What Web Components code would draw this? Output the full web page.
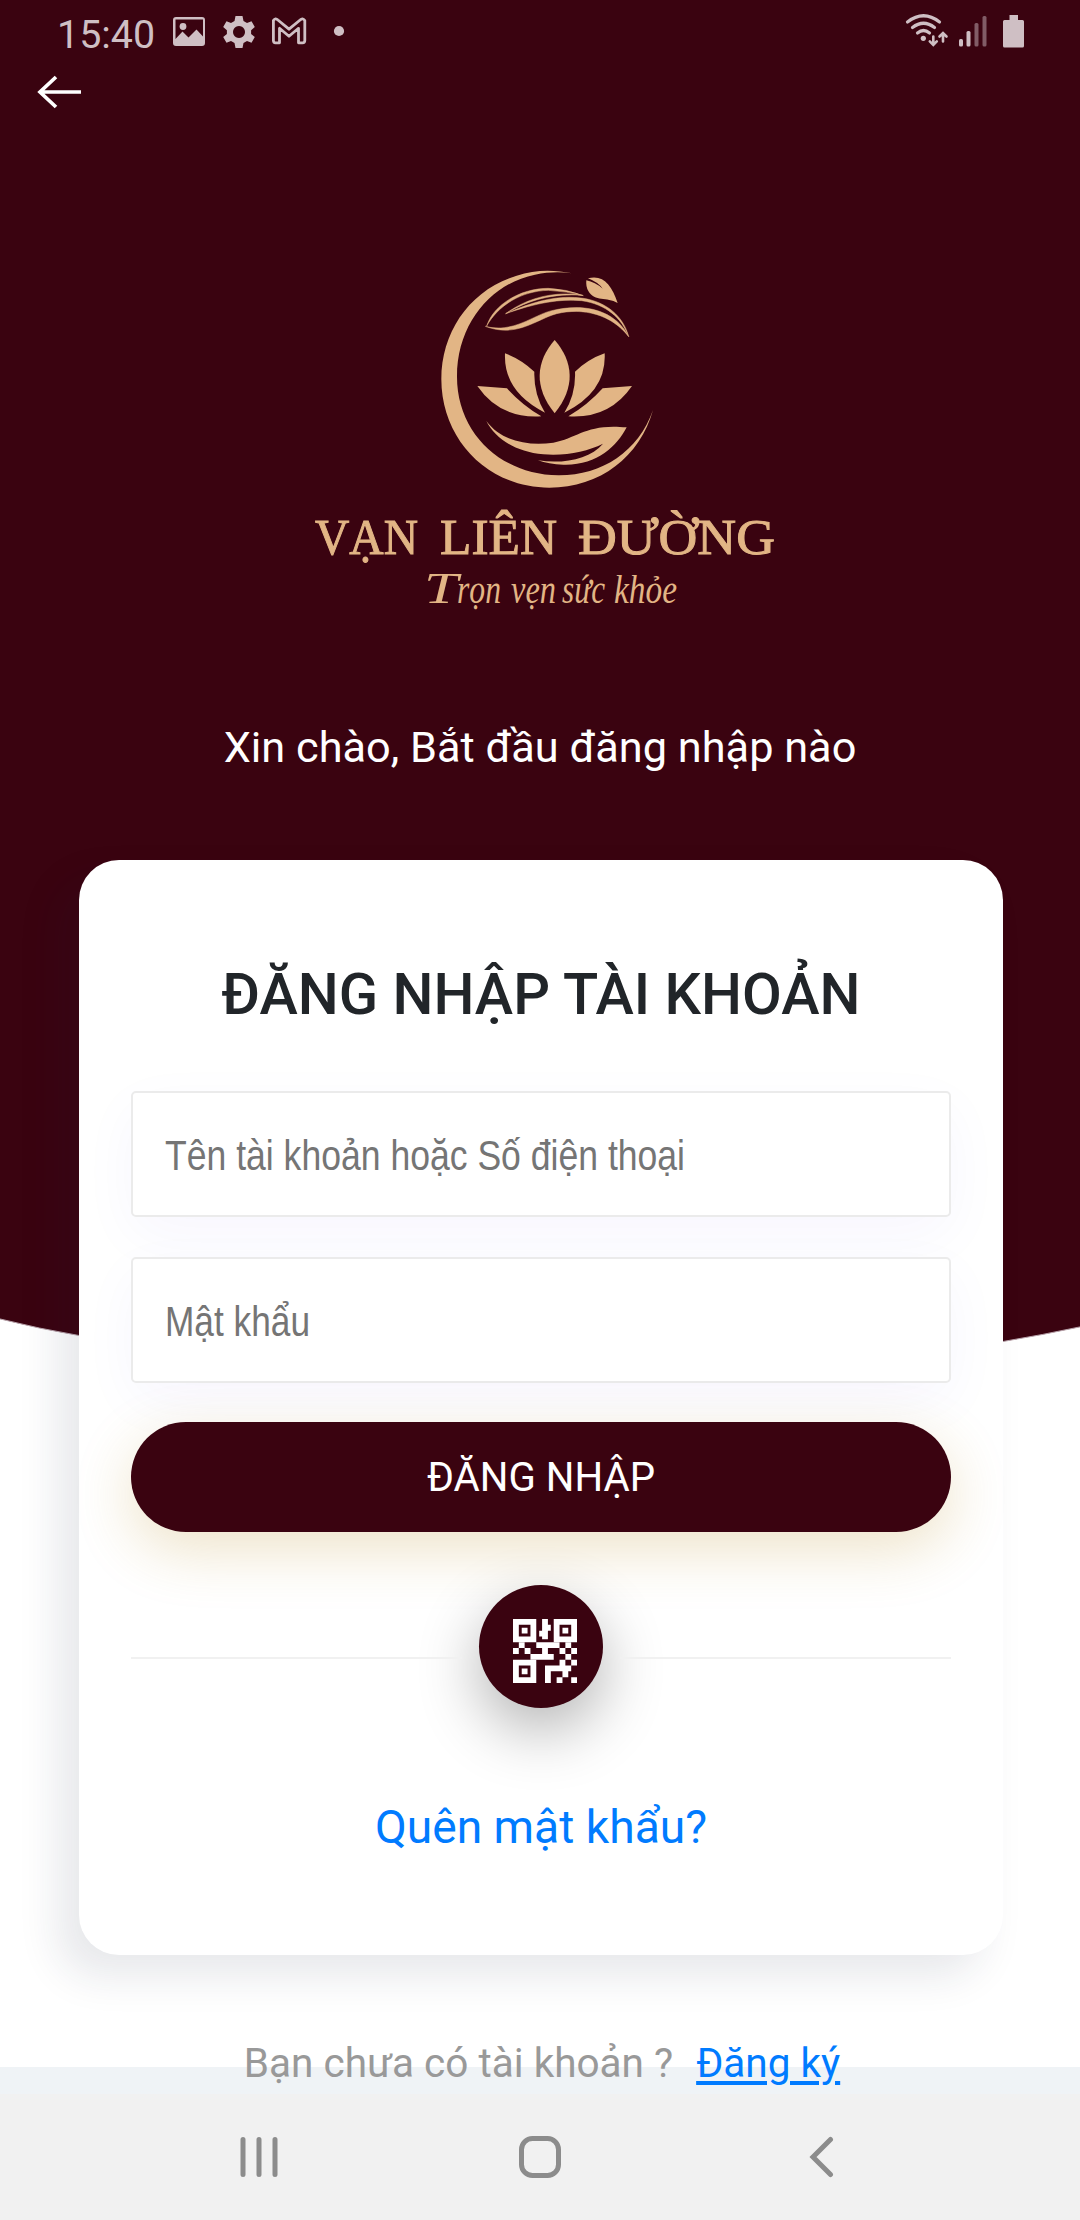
<!DOCTYPE html>
<html lang="vi">
<head>
<meta charset="utf-8">
<title>Đăng nhập</title>
<style>
html,body{margin:0;padding:0;background:#fff}
body{font-family:Roboto,"Liberation Sans",sans-serif;width:1080px;height:2220px;overflow:hidden}
</style>
</head>
<body>
<login-screen></login-screen>
<script>
const define = (name, html) => {
  const t = document.createElement('template');
  t.innerHTML = html;
  customElements.define(name, class extends HTMLElement {
    constructor() {
      super();
      this.attachShadow({ mode: 'open' }).append(t.content.cloneNode(true));
    }
  });
};

define('status-bar', `
<style>
:host{display:flex;height:68px;align-items:center;justify-content:space-between;color:#cfbfc4}
span{font-size:39.4px;line-height:67px;width:95px;margin-left:57px;white-space:nowrap}
svg{display:block;fill:currentColor}
.left{display:flex;align-items:center}
</style>
<div class="left"><span>15:40</span>
<svg width="200" height="68" viewBox="152 0 200 68">
  <path fill-rule="evenodd" d="M176 17h26a3 3 0 0 1 3 3v23a3 3 0 0 1-3 3h-26a3 3 0 0 1-3-3v-23a3 3 0 0 1 3-3zM175.500 19.500v19.500l7-7.500 6 6 8-8 6.500 7v-17z"/>
  <circle cx="183" cy="26.500" r="3.400"/>
  <path fill-rule="evenodd" d="M235.500 16h7l1 5 3.500 2 4.500-1.700 3.300 5.700-3.700 3.300v3.600l3.700 3.200-3.300 5.700-4.500-1.700-3.500 2-1 5h-7l-1-5-3.500-2-4.500 1.700-3.300-5.700 3.700-3.200v-3.600l-3.700-3.300 3.300-5.700 4.500 1.700 3.500-2zM239 26a6 6 0 1 0 .01 0z"/>
  <path fill="none" stroke="currentColor" stroke-width="2.800" stroke-linejoin="round" d="M273.400 20.500q2-3 4.500-.5l11.100 9.200 11.100-9.200q2.500-2.500 4.700.5v20q0 2.300-2.300 2.300h-4v-14.500l-9.500 8-9.500-8v14.500h-4q-2.100 0-2.100-2.300z"/>
  <circle cx="339" cy="31" r="5.100"/>
</svg></div>
<svg width="180" height="68" viewBox="900 0 180 68">
  <g fill="none" stroke="currentColor" stroke-width="3.200" stroke-linecap="round">
    <path d="M907.500 22q16-12.500 32 0M912.500 27.500q11-8.500 22 0M917.500 33q6-5 12 0"/>
    <path stroke-width="2.600" d="M933.300 36.500v7.500M929.800 41.300l3.500 3.500 3.500-3.500M943 41.500v-7.500M939.500 36.500l3.500-3.500 3.500 3.500"/>
  </g>
  <circle cx="923.300" cy="38.300" r="2.600"/>
  <rect x="959" y="39" width="4" height="7.500" rx="1.500"/>
  <rect x="966.500" y="31" width="4" height="15.500" rx="1.500"/>
  <rect x="974.500" y="23" width="4" height="23.500" rx="1.500" opacity=".48"/>
  <rect x="982.500" y="16" width="4" height="30.500" rx="1.500" opacity=".48"/>
  <path d="M1009.500 15h8.500v5h4.500q1.500 0 1.500 1.500v24.500q0 1.500-1.500 1.500h-18q-1.500 0-1.500-1.500v-24.500q0-1.500 1.500-1.500h5z"/>
</svg>`);

define('back-bar', `
<style>:host{display:flex;height:48px;align-items:center;padding-left:34px}svg{display:block}</style>
<svg width="52" height="48" viewBox="34 68 52 48"><path d="M56 77L40 92l16 15M40 92H81" fill="none" stroke="#fff" stroke-width="3.700"/></svg>`);

define('brand-logo', `
<style>:host{display:flex;justify-content:center;padding-top:139px}svg{display:block;fill:#e2b585}
.n{font:51px "Liberation Serif",serif;stroke:#e2b585;stroke-width:1}
.t{font:italic 39px "Liberation Serif",serif}</style>
<svg width="490" height="365" viewBox="295 255 490 365">
  <g transform="translate(420 255) scale(.33333)">
    <path d="M456 55C400 44 345 44 290 62C150 104 64 230 64 372C64 555 205 698 388 698C540 698 660 605 699 465C655 590 545 662 415 661C245 660 111 535 111 365C111 205 215 85 345 59C385 51 420 50 456 55Z"/>
    <path d="M404 255C348 320 340 395 404 475C468 395 460 320 404 255Z"/>
    <path d="M255 295Q302 312 343 350Q341 417 375 473Q250 410 255 295ZM554 295Q505 312 465 350Q468 417 433 473Q560 410 554 295Z"/>
    <path d="M172 393L261 400Q306 450 364 484Q240 492 172 393ZM636 393L548 400Q503 450 445 484Q568 492 636 393Z"/>
    <path d="M199 498C245 560 325 573 400 563C475 548 500 505 620 517C590 575 530 632 430 629Q385 628 354 616C430 628 510 612 549 566C500 590 440 603 370 598C285 590 225 550 199 498Z"/>
    <path d="M499 76Q525 81 548 101Q535 82 504 70C550 58 575 90 593 144C560 124 525 142 505 108Q497 95 499 76Z"/>
    <g stroke="#e2b585" stroke-width="1.500">
    <path d="M200 213C220 150 300 100 385 100Q440 102 490 122Q440 109 385 106C305 108 235 150 200 213Z"/>
    <path d="M257 176C320 130 400 107 488 121C400 114 325 135 257 176Z"/>
    <path d="M257 176C350 135 420 120 490 130C560 141 610 185 625 242C605 190 560 148 485 137C420 131 350 143 257 176Z"/>
    <path d="M196 214C280 236 340 180 395 167C495 143 585 165 627 246C575 178 490 157 410 176C350 192 290 250 196 214Z"/>
    </g>
  </g>
  <text class="n" y="553.500"><tspan x="315" textLength="103" lengthAdjust="spacingAndGlyphs">VẠN</tspan><tspan> </tspan><tspan x="440" textLength="117" lengthAdjust="spacingAndGlyphs">LIÊN</tspan><tspan> </tspan><tspan x="578" textLength="197" lengthAdjust="spacingAndGlyphs">ĐƯỜNG</tspan></text>
  <text class="t" y="603"><tspan x="424" font-size="44" textLength="34" lengthAdjust="spacingAndGlyphs">T</tspan><tspan x="457" textLength="44" lengthAdjust="spacingAndGlyphs">rọn</tspan><tspan> </tspan><tspan x="511" textLength="45" lengthAdjust="spacingAndGlyphs">vẹn</tspan><tspan> </tspan><tspan x="562" textLength="43" lengthAdjust="spacingAndGlyphs">sức</tspan><tspan> </tspan><tspan x="614" textLength="63" lengthAdjust="spacingAndGlyphs">khỏe</tspan></text>
</svg>`);

define('wave-backdrop', `
<style>
:host{display:flex;flex-direction:column;background:#eff3f6}
.page{background:#fff;height:2067px}
svg{display:block}
</style>
<div class="page"><svg width="1080" height="1400" viewBox="0 0 1080 1400"><path fill="#3a0310" stroke="#b9a3ab" stroke-width="1" d="M-2-2H1082V1326.500Q1042 1335 1003 1341.500Q540 1420 79 1335.500Q40 1329 -2 1318.500Z"/></svg></div>`);

customElements.define('input-hint', class extends HTMLElement {
  constructor() {
    super();
    this.attachShadow({ mode: 'open' }).innerHTML = `
<style>
:host{display:flex;box-sizing:border-box;height:126px;align-items:center;border:2px solid #ebebeb;border-radius:5px;background:#fff;padding-left:32px;box-shadow:0 18px 58px rgba(40,30,235,.04)}
svg{display:block;overflow:visible}
text{font:42px "Liberation Sans Narrow","Liberation Sans",sans-serif;fill:#757575}
</style>
<svg width="700" height="60"><text x="0" y="46" lengthAdjust="spacingAndGlyphs" textLength="${this.getAttribute('width')}">${this.getAttribute('label')}</text></svg>`;
  }
});

define('pill-button', `
<style>:host{display:flex;height:110px;align-items:center;justify-content:center;border-radius:55px;background:#3a0310;color:#fff;font-size:40.200px;box-shadow:0 18px 58px rgba(184,140,30,.24)}</style><slot></slot>`);

define('qr-divider', `
<style>
:host{display:flex;justify-content:space-between;align-items:flex-start}
i{display:block;width:331px;height:2px;margin-top:72px;background:#f1f1f1;position:relative}
.c{width:124px;height:123px;border-radius:50%;background:#3a0310;display:flex;align-items:center;justify-content:center;box-shadow:0 22px 62px rgba(0,0,0,.3)}
svg{display:block;margin:9px 0 0 8px}
</style>
<i></i><div class="c"><svg width="64" height="64" viewBox="0 0 11 11" fill="#fff">
<path fill-rule="evenodd" d="M0 0h4v4H0zM1 1v2h2v-2zM7 0h4v4H7zM8 1v2h2v-2zM0 7h4v4H0zM1 8v2h2v-2z"/>
<path d="M1.500 1.500h1v1h-1zM8.500 1.500h1v1h-1zM1.500 8.500h1v1h-1zM5 0h1v1h.5v1H6v1.500H5V3h-.5V2H5zM1 4h1v1H1zM0 5h1v1H0zM2 5h1v1H2zM4 4h4v1H6v1h1v1H3V6h2V5H4zM9 4h1v1H9zM8 5h1v1H8zM10 5h1v1h-1zM9 6h1v1H9zM8 7h1v1H8zM10 7h1v1h-1zM5.500 8H10v1h-.5v1h-1V9h-2v2h-1zM7.500 10h1v1h-1zM10 10h1v1h-1z"/>
</svg></div><i></i>`);

define('login-card', `
<style>
:host{display:flex;flex-direction:column;box-sizing:border-box;width:924px;height:1095px;padding:99px 52px 0;border-radius:40px;background:#fff;box-shadow:-21px 21px 42px rgba(25,35,65,.105)}
h1{margin:0;font-size:57.750px;line-height:71px;height:70px;font-weight:500;color:#212529;text-align:center;white-space:nowrap}
.form{display:flex;flex-direction:column;gap:40px;margin-top:62px}
pill-button{margin-top:-1px}
qr-divider{margin-top:53px}
a{display:block;margin-top:89px;font-size:46.200px;line-height:60px;color:#007bff;text-align:center}
</style>
<h1>ĐĂNG NHẬP TÀI KHOẢN</h1>
<div class="form">
<input-hint label="Tên tài khoản hoặc Số điện thoại" width="520"></input-hint>
<input-hint label="Mật khẩu" width="145"></input-hint>
<pill-button>ĐĂNG NHẬP</pill-button>
</div>
<qr-divider></qr-divider>
<a>Quên mật khẩu?</a>`);

define('signup-line', `
<style>:host{display:flex;justify-content:center;gap:23px;font-size:40.500px;line-height:49px;height:48px;color:#999}a{color:#007bff;text-decoration:underline;text-decoration-thickness:4px;text-underline-offset:4px}</style>
<span>Bạn chưa có tài khoản ?</span><a>Đăng ký</a>`);

define('nav-bar', `
<style>:host{display:flex;height:126px;background:#f1f1f1;align-items:center;justify-content:center}svg{display:block}</style>
<svg width="1080" height="126" viewBox="0 2094 1080 126" fill="none" stroke="#8c8c8c" stroke-width="5" stroke-linecap="round" stroke-linejoin="miter">
<path d="M243 2139.500v35M259 2139.500v35M275 2139.500v35M830.500 2139.500L813 2157l17.500 17.500"/><rect x="521.500" y="2138.500" width="37" height="37" rx="11"/></svg>`);

define('login-screen', `
<style>
:host{display:grid;width:1080px;height:2220px;overflow:hidden}
wave-backdrop,main{grid-area:1/1}
main{display:flex;flex-direction:column;position:relative}
p{margin:98px 0 82px;line-height:60px;font-size:43.300px;color:#fff;text-align:center}
login-card{align-self:center;margin-left:2px}
signup-line{margin-top:84px;margin-left:4px}
nav-bar{margin-top:auto}
</style>
<wave-backdrop></wave-backdrop>
<main>
<status-bar></status-bar><back-bar></back-bar><brand-logo></brand-logo>
<p>Xin chào, Bắt đầu đăng nhập nào</p>
<login-card></login-card>
<signup-line></signup-line>
<nav-bar></nav-bar>
</main>`);
</script>
</body>
</html>
